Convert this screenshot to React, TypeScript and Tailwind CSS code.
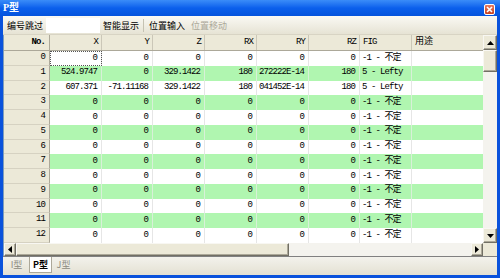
import React from "react";

const COLS = [
  { key: "X", w: "w-[52px]" },
  { key: "Y", w: "w-[51px]" },
  { key: "Z", w: "w-[52px]" },
  { key: "RX", w: "w-[52px]" },
  { key: "RY", w: "w-[52px]" },
  { key: "RZ", w: "w-[51px]" },
];

const ZERO_ROW = ["0", "0", "0", "0", "0", "0", "-1 - 不定"];

// row 13 only shows a sliver at the bottom edge, so it carries no text
const ROWS: string[][] = [
  ZERO_ROW,
  ["524.9747", "0", "329.1422", "180", "272222E-14", "180", "5 - Lefty"],
  ["607.371", "-71.11168", "329.1422", "180", "041452E-14", "180", "5 - Lefty"],
  ...Array.from({ length: 10 }, () => ZERO_ROW),
  ["", "", "", "", "", "", ""],
];

const cellFont = "font-['Liberation_Mono','Noto_Sans_CJK_SC',monospace] text-[9px] tracking-[-0.9px]";

function UpArrow() {
  return (
    <svg width="7" height="4" viewBox="0 0 7 4">
      <path d="M3.5 0 L7 4 L0 4 Z" fill="#000" />
    </svg>
  );
}

function DownArrow() {
  return (
    <svg width="7" height="4" viewBox="0 0 7 4">
      <path d="M0 0 L7 0 L3.5 4 Z" fill="#000" />
    </svg>
  );
}

function LeftArrow() {
  return (
    <svg width="4" height="7" viewBox="0 0 4 7">
      <path d="M4 0 L4 7 L0 3.5 Z" fill="#000" />
    </svg>
  );
}

function RightArrow() {
  return (
    <svg width="4" height="7" viewBox="0 0 4 7">
      <path d="M0 0 L4 3.5 L0 7 Z" fill="#000" />
    </svg>
  );
}

// classic raised 3D box used for scrollbar buttons / thumbs
const raised =
  "bg-[#ece9d8] border border-t-[#f8f7f2] border-l-[#f8f7f2] border-r-[#716f64] border-b-[#716f64] shadow-[inset_-1px_-1px_0_#aca899]";

export default function App() {
  return (
    <div className="w-[500px] h-[278px] bg-[#0a52dc] flex flex-col overflow-hidden font-['Noto_Sans_CJK_SC',sans-serif]">
      {/* Title bar */}
      <div className="h-[16px] shrink-0 flex items-center justify-between px-[3px] bg-gradient-to-b from-[#3a8cf8] via-[#0b5fec] to-[#0553dc]">
        <span className="text-white font-bold text-[10px] leading-none font-['Liberation_Serif','Noto_Sans_CJK_SC',serif]">
          P型
        </span>
        <div className="w-[11px] h-[11px] mr-[2px] mt-[2px] rounded-[2px] border border-white bg-gradient-to-b from-[#e8785c] to-[#c8401c] flex items-center justify-center">
          <svg width="7" height="7" viewBox="0 0 7 7">
            <path d="M1 1 L6 6 M6 1 L1 6" stroke="#fff" strokeWidth="1.6" />
          </svg>
        </div>
      </div>

      {/* Window body */}
      <div className="flex-1 mx-[3px] mb-[3px] flex flex-col bg-[#ece9d8] min-h-0">
        {/* Toolbar */}
        <div className="h-[19px] shrink-0 flex items-center text-[9px] text-black bg-gradient-to-b from-[#faf9f4] to-[#e6e3d4] border-b border-[#d8d4c4]">
          <span className="ml-[4px] leading-none">编号跳过</span>
          <div className="ml-[3px] w-[54px] h-[15px] bg-white" />
          <span className="ml-[3px] leading-none">智能显示</span>
          <div className="ml-[4px] w-px h-[13px] bg-[#c5c2b2]" />
          <span className="ml-[5px] leading-none">位置输入</span>
          <span className="ml-[6px] leading-none text-[#aca899]">位置移动</span>
        </div>

        {/* Grid + vertical scrollbar */}
        <div className="h-[208px] shrink-0 flex border-l border-[#7f9db9]">
          <div className="w-[479px] flex flex-col overflow-hidden bg-white">
            {/* Header */}
            <div className={`h-[16px] shrink-0 flex bg-[#ece9d8] border-b border-[#aca899] ${cellFont}`}>
              <div className="w-[46px] h-full flex items-center justify-end pr-[4px] border-r border-[#aca899] font-bold">
                No.
              </div>
              {COLS.map((c) => (
                <div
                  key={c.key}
                  className={`${c.w} h-full flex items-center justify-end pr-[3px] border-r border-[#cbc7b8]`}
                >
                  {c.key}
                </div>
              ))}
              <div className="w-[52px] h-full flex items-center pl-[3px] border-r border-[#cbc7b8]">FIG</div>
              <div className="w-[71px] h-full flex items-center pl-[3px] tracking-normal">用途</div>
            </div>

            {/* Rows */}
            {ROWS.map((row, i) => {
              const green = i % 2 === 1;
              return (
                <div
                  key={i}
                  className={`h-[14.75px] shrink-0 flex ${green ? "bg-[#b0f6b0]" : "bg-white"} ${cellFont}`}
                >
                  <div className="w-[46px] h-full flex items-center justify-end pr-[4px] bg-[#ece9d8] border-r border-b border-r-[#aca899] border-b-[#d6d2c2]">
                    {i < 13 ? i : ""}
                  </div>
                  {COLS.map((c, j) => (
                    <div
                      key={c.key}
                      className={`${c.w} h-full flex items-center justify-end pr-[4px] overflow-hidden whitespace-nowrap border-r ${
                        green ? "border-[#d8f0d8]" : "border-[#e6e6e6]"
                      } ${i === 0 && j === 0 ? "outline outline-1 outline-dotted outline-[#555] -outline-offset-1" : ""}`}
                    >
                      {row[j]}
                    </div>
                  ))}
                  <div
                    className={`w-[52px] h-full flex items-center pl-[2px] whitespace-nowrap border-r ${
                      green ? "border-[#d8f0d8]" : "border-[#e6e6e6]"
                    }`}
                  >
                    {row[6]}
                  </div>
                  <div className="w-[71px] h-full" />
                </div>
              );
            })}
          </div>

          {/* Vertical scrollbar */}
          <div className="w-[14px] flex flex-col bg-[#f4f3ee]">
            <div className={`h-[15px] shrink-0 flex items-center justify-center ${raised}`}>
              <UpArrow />
            </div>
            <div className={`h-[22px] shrink-0 ${raised}`} />
            <div className="flex-1" />
            <div className={`h-[15px] shrink-0 flex items-center justify-center ${raised}`}>
              <DownArrow />
            </div>
          </div>
        </div>

        {/* Horizontal scrollbar */}
        <div className="h-[13px] shrink-0 flex bg-[#f4f3ee] border-l border-[#7f9db9]">
          <div className={`w-[12px] shrink-0 flex items-center justify-center ${raised}`}>
            <LeftArrow />
          </div>
          <div className={`w-[273px] shrink-0 ${raised}`} />
          <div className="flex-1" />
          <div className={`w-[12px] shrink-0 flex items-center justify-center ${raised}`}>
            <RightArrow />
          </div>
          <div className="w-[14px] shrink-0 bg-[#ece9d8]" />
        </div>

        {/* Tab bar */}
        <div className="flex-1 flex items-start border-t border-[#808080] bg-gradient-to-b from-[#f3f2ec] to-[#e4e1d3] text-[9px]">
          <div className="ml-[4px] w-[19px] h-[16px] flex items-center justify-center text-[#8c8a80]">I型</div>
          <div className="ml-[3px] h-[16px] w-[23px] flex items-center justify-center bg-white border-x border-b border-[#aca899] font-bold">
            P型
          </div>
          <div className="ml-[2px] w-[19px] h-[16px] flex items-center justify-center text-[#8c8a80]">J型</div>
        </div>
      </div>
    </div>
  );
}
